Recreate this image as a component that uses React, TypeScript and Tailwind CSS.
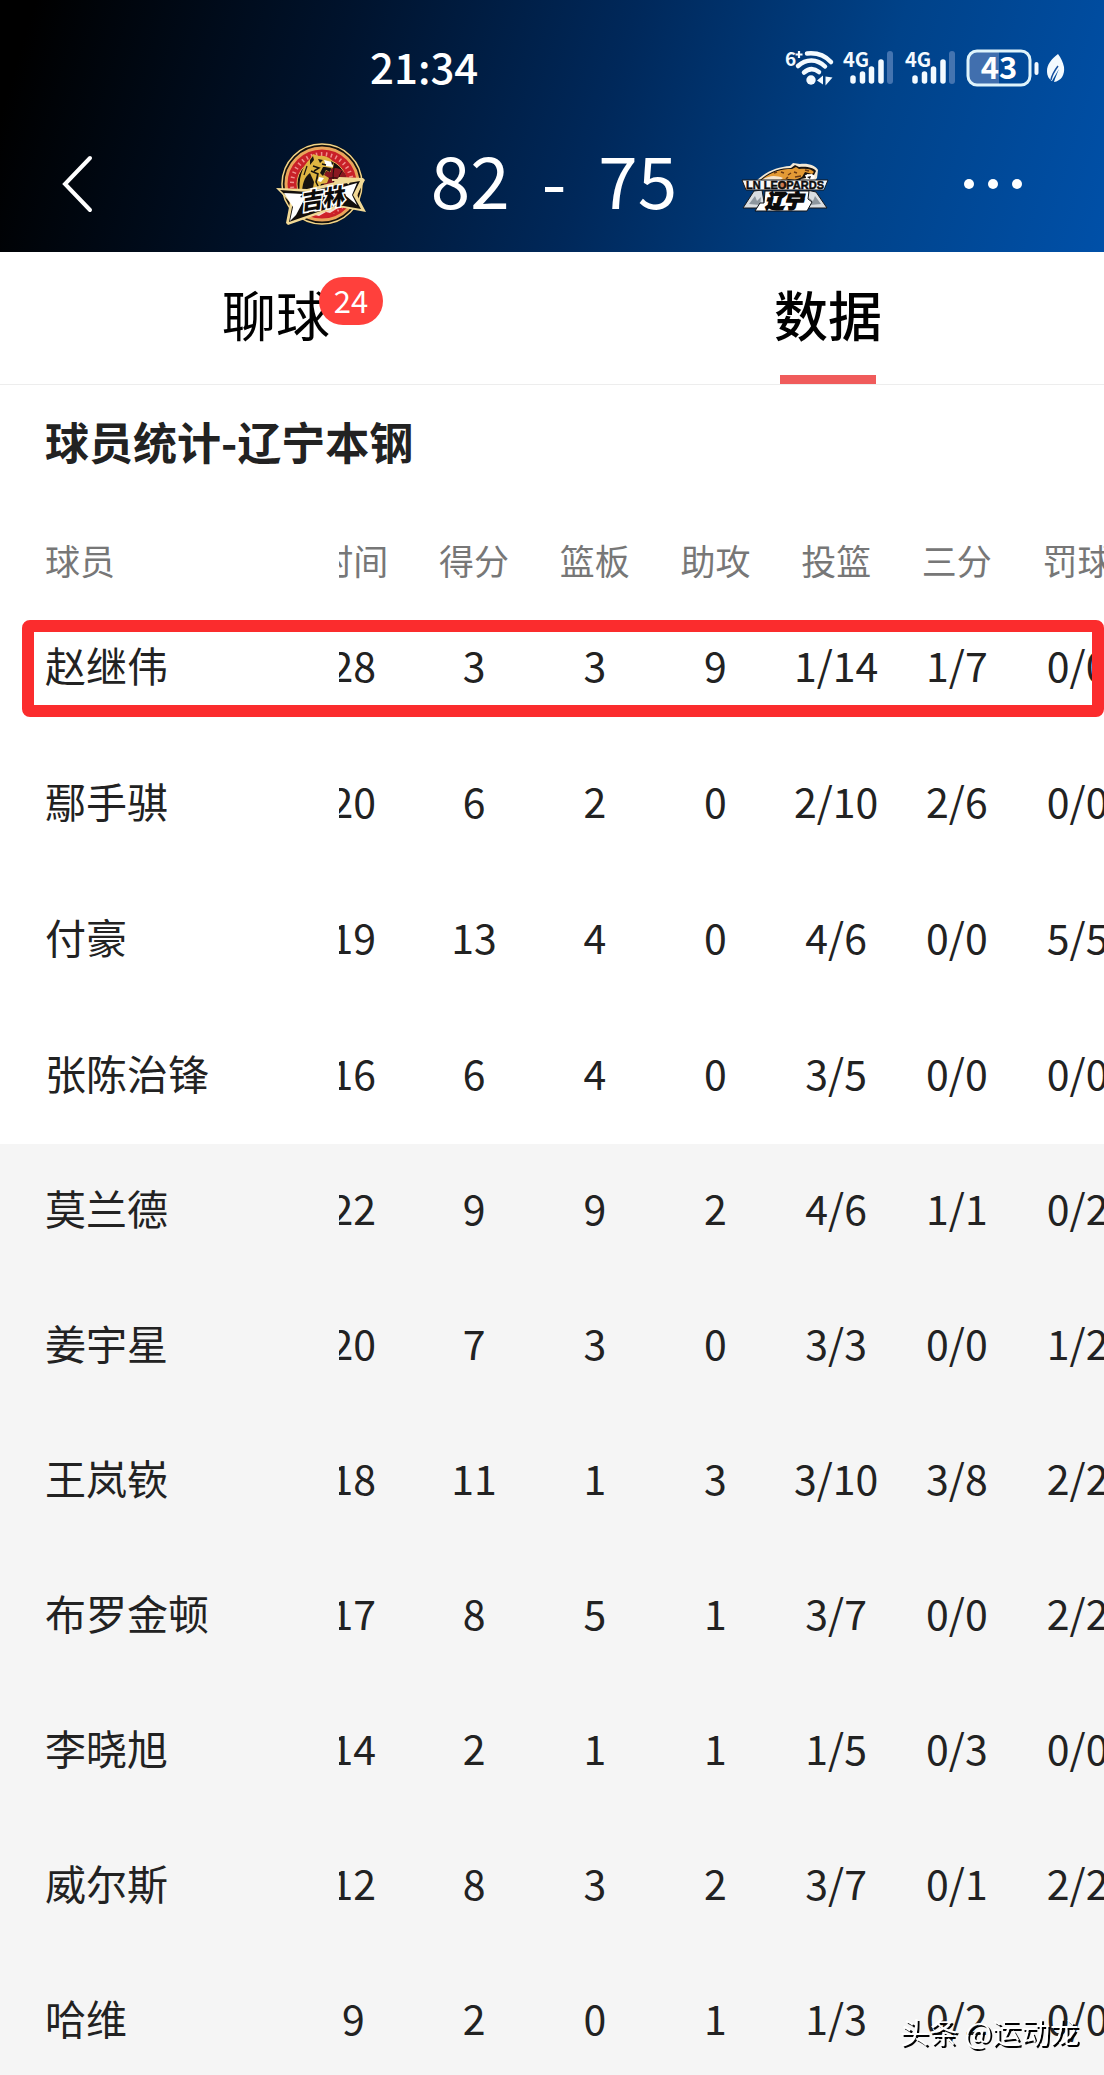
import { useLayoutEffect, useRef } from "react";
import clsx from "clsx";

const columns = ["时间", "得分", "篮板", "助攻", "投篮", "三分", "罚球"];

const starters = [
    { name: "赵继伟", stats: ["28", "3", "3", "9", "1/14", "1/7", "0/0"] },
    { name: "鄢手骐", stats: ["20", "6", "2", "0", "2/10", "2/6", "0/0"] },
    { name: "付豪", stats: ["19", "13", "4", "0", "4/6", "0/0", "5/5"] },
    { name: "张陈治锋", stats: ["16", "6", "4", "0", "3/5", "0/0", "0/0"] },
];

const bench = [
    { name: "莫兰德", stats: ["22", "9", "9", "2", "4/6", "1/1", "0/2"] },
    { name: "姜宇星", stats: ["20", "7", "3", "0", "3/3", "0/0", "1/2"] },
    { name: "王岚嵚", stats: ["18", "11", "1", "3", "3/10", "3/8", "2/2"] },
    { name: "布罗金顿", stats: ["17", "8", "5", "1", "3/7", "0/0", "2/2"] },
    { name: "李晓旭", stats: ["14", "2", "1", "1", "1/5", "0/3", "0/0"] },
    { name: "威尔斯", stats: ["12", "8", "3", "2", "3/7", "0/1", "2/2"] },
    { name: "哈维", stats: ["9", "2", "0", "1", "1/3", "0/2", "0/0"] },
];

type Player = { name: string; stats: string[] };

function WifiIcon() {
    return (
        <svg width="50" height="38" viewBox="0 0 50 38" fill="none" className="overflow-visible" aria-label="Wi-Fi 6+">
            <text x="0" y="17" fontSize="19" fontWeight="700" fill="#f3faff">6</text>
            <path d="M14 2v7M10.500 5.500h7" stroke="#f3faff" strokeWidth="2.200" />
            <g stroke="#f3faff" strokeWidth="4.500" strokeLinecap="round">
                <path d="M22 4.500C31 3.500 40 6.500 46 13" />
                <path d="M13 17C21 9.500 32 9.500 40 17.500" />
                <path d="M19 23.500c5-4.500 10-4.500 15-.500" />
            </g>
            <circle cx="26" cy="31" r="4.700" fill="#f3faff" />
            <path d="M32 31.500l6-5v9zM40.500 27.500v9l7-8z" fill="#f3faff" />
        </svg>
    );
}

function SignalIcon() {
    return (
        <svg width="52" height="38" viewBox="0 0 52 38" fill="none" className="overflow-visible" aria-label="4G">
            <text x="0" y="18" fontSize="20" fontWeight="700" fill="#f3faff">4G</text>
            <g stroke="#f3faff" strokeWidth="5.500" strokeLinecap="round">
                <path d="M10 29v3" />
                <path d="M19.500 25v7" />
                <path d="M28.500 20v12" />
                <path d="M38 13v19" />
            </g>
            <path d="M47 5v27" stroke="#4474b0" strokeWidth="6" strokeLinecap="round" />
        </svg>
    );
}

function BatteryIcon() {
    return (
        <svg width="74" height="38" viewBox="0 0 74 38" fill="none" className="overflow-visible" aria-label="43%">
            <path d="M11 2h22v34H11a9 9 0 0 1-9-9V11a9 9 0 0 1 9-9z" fill="#416fae" />
            <rect x="2" y="2" width="62" height="34" rx="9" stroke="#dff4fb" strokeWidth="3" />
            <path d="M70.500 15v9" stroke="#f3faff" strokeWidth="4" strokeLinecap="round" />
            <text x="33" y="30" textAnchor="middle" fontSize="31" fontWeight="700" fill="#fff">43</text>
        </svg>
    );
}

function LeafIcon() {
    return (
        <svg width="20" height="30" viewBox="0 0 20 30" fill="none">
            <path d="M12 1C5 6 1 12 1 18c0 5 2 8 5 10 2-4 4-7 7-12-2 5-4 9-5 13 7-1 11-7 10-15C17 9 15 5 12 1z" fill="#f3faff" />
            <path d="M12 13C9 17 6 21 5 27" stroke="#1650a0" strokeWidth="1.500" />
        </svg>
    );
}

function TigersLogo() {
    return (
        <svg width="92" height="84" viewBox="0 0 92 84" aria-label="吉林">
            <circle cx="47" cy="42" r="41" fill="#15110c" />
            <circle cx="47" cy="42" r="40" fill="none" stroke="#f0d489" strokeWidth="1.500" />
            <circle cx="47" cy="42" r="36" fill="#c92028" stroke="#e9a45a" strokeWidth="3" />
            <circle cx="47" cy="42" r="30" fill="none" stroke="#f0908e" strokeWidth="4" strokeDasharray="1.500 3.500" />
            <circle cx="47" cy="42" r="25" fill="#17100d" stroke="#e4b85c" strokeWidth="1" />
            {/* basketball behind the head */}
            <circle cx="60" cy="38" r="12" fill="#8a1820" />
            <path d="M48 38q12-5 24 1M59 26q-3 12 3 24M67 29q-6 8-3 20" stroke="#250d0d" fill="none" />
            {/* tiger */}
            <path d="M25 52C23 38 27 24 35 17l3-5 6 2c6-1 12 2 15 7l-1 5-3 1 1 3-5-1-2 4 5 3-2 5-6 1-4 10z" fill="#dfb542" />
            <path d="M27 52c0-9 2-17 8-21l4 9-2 12z" fill="#171310" />
            <path d="M49 18l8 2 1 5-7-1zM44 35l5 1-3 4-3-1z" fill="#fff" />
            <path d="M35 18l3-4 1 4-4 5zM43 17l5 1-3 3zM50 25l6 1-1 4-4-2-3 6-3-3 3-6zM56 19l3 2-2 2z" fill="#171310" />
            <path d="M38 24l6 2-5 3M36 29l7 3-1 5M43 31l-2 9 3 6M47 22l4 1" stroke="#171310" strokeWidth="1.500" fill="none" />
            <path d="M32 24l-3 9" stroke="#171310" strokeWidth="1.200" />
            <path d="M31 69q16-10 34-5-5 10-18 12-9 0-16-7z" fill="#cf2229" />
            <path d="M40 73l7-6 3 3 8-5 5 1-8 5-4-1-7 4z" fill="#f7dcd0" />
            {/* star banner */}
            <path d="M1 46l31 1 28-7 4-5 24 1 2 2-8 15 9 17-27-5-51 18-2-2 4-21z" fill="#f1d995" />
            <path d="M5 48l28 2 28-7 24-4-7 14 8 14-23-4-49 17 4-20z" fill="#130f0d" />
            <path d="M9 51l19 1-3 3 5 1-9 17-6 6 3-14zM82 41l-14 4 3 9 11 9-5-10z" fill="#fff" />
            <text x="47" y="65" textAnchor="middle" fontSize="22" fontWeight="900" fontStyle="italic" transform="rotate(-9 47 58)" fill="#0d0b0a" stroke="#fff" strokeWidth="3" paintOrder="stroke">吉林</text>
            <path d="M57 38h4l-2 5M64 37h4l-2 5M71 37h4l-2 5" stroke="#f1d995" strokeWidth="2" fill="none" />
        </svg>
    );
}

function LeopardsLogo() {
    return (
        <svg width="88" height="58" viewBox="0 -8 88 58" aria-label="辽宁">
            <path d="M12 22C22 9 36 4 49 3l3-3 7 1c9-1 16 2 18 6l-1 8-5 6-5-3-6 4-17 3z" fill="#f4e9d5" />
            <path d="M15 21C26 9 38 5 50 5l4-3 4 2c8-1 15 1 17 4l-2 4-7-1-1 4-5 1-3 4-30 1z" fill="#16120f" />
            <path d="M18 19C29 9 39 6 51 6l4-2 3 2c7-1 13 0 15 3l-2 2-7-2-3 5-7 3-7-1-4 3-6-4-13 4z" fill="#e39a35" />
            <path d="M18 19C27 12 34 12 42 15l-5 4z" fill="#f6e6cf" />
            <path d="M33 10l3-1M40 9l3 1M47 12l3-2M53 9l3 1M45 16l2-2M64 7l4 1M54 14l6-1M51 17l-1 3" stroke="#6b3a14" strokeWidth="1.500" />
            <path d="M64 12l7-1 3 3-4 5-4-2z" fill="#fff" />
            <path d="M66 14l4-1-1 3z" fill="#16120f" />
            {/* mountains */}
            <path d="M2 45l11-17 8-1 3 18zM86 45L75 29l-9-2-3 18z" fill="#d9dde1" stroke="#17191c" />
            <path d="M8 41l6-8 2 5 4-4-1 8zM80 41l-6-8-2 5-4-3 1 7z" fill="#8d969e" />
            <path d="M1 17h86l-4 10H5z" fill="#f6f6f6" stroke="#15191f" />
            <circle cx="42" cy="22" r="4" fill="#c97a50" />
            <text x="44" y="26" textAnchor="middle" fontFamily="Liberation Sans" fontSize="11" fontWeight="700" fill="#0d0d0d" stroke="#0d0d0d" strokeWidth="0.500">LN LEOPARDS</text>
            <path d="M24 28h44l-1 8 4 3-5 9H14l5-8h4z" fill="#fff" stroke="#101317" />
            <text x="43" y="45" textAnchor="middle" fontSize="19" fontWeight="900" fontStyle="italic" fill="#0b0b0b" stroke="#0b0b0b" strokeWidth="1.500">辽宁</text>
        </svg>
    );
}

function StatusBar() {
    return (
        <div className="grid h-[136px] grid-cols-[370px_1fr_auto] items-center pr-[38px]">
            <time className="col-start-2 pb-1 text-[42px] leading-none font-medium">21:34</time>
            <div className="flex items-center">
                <WifiIcon />
                <div className="ml-[8px] flex gap-[10px]">
                    <SignalIcon />
                    <SignalIcon />
                </div>
                <div className="ml-[9px] flex items-center gap-[6px]">
                    <BatteryIcon />
                    <LeafIcon />
                </div>
            </div>
        </div>
    );
}

function ScoreBar() {
    return (
        <div className="grid h-[96px] grid-cols-[1fr_auto_1fr] items-center">
            <button type="button" aria-label="返回" className="ml-[56px] w-[40px]">
                <svg width="40" height="64" viewBox="0 0 40 64" fill="none" stroke="#fff" strokeWidth="4" strokeLinecap="round">
                    <path d="M34 6L9 32l25 26" />
                </svg>
            </button>
            <div className="flex items-center">
                <TigersLogo />
                <div className="mx-[64px] flex gap-[32px] pb-3 text-[71px] leading-none">
                    <span>82</span>
                    <span>-</span>
                    <span>75</span>
                </div>
                <LeopardsLogo />
            </div>
            <button type="button" aria-label="更多" className="mr-[82px] flex gap-[14px] justify-self-end">
                <span className="size-[10px] rounded-full bg-white" />
                <span className="size-[10px] rounded-full bg-white" />
                <span className="size-[10px] rounded-full bg-white" />
            </button>
        </div>
    );
}

function Tabs() {
    return (
        <nav className="grid h-[133px] shrink-0 grid-cols-2 border-b border-[#ededed] bg-white text-[54px] leading-none text-black">
            <button type="button" className="flex items-center justify-center pb-2">
                <span className="relative">
                    聊球
                    <span className="absolute -top-[10px] left-[97px] flex h-[48px] w-[64px] items-center justify-center rounded-full bg-[#ff403c] pb-1 text-[31px] text-white">
                        24
                    </span>
                </span>
            </button>
            <button type="button" className="relative flex items-center justify-center pb-2 font-medium">
                数据
                <span className="absolute bottom-0 h-[9px] w-[96px] bg-[#f05b5b]" />
            </button>
        </nav>
    );
}

function PlayerRow({ player, isBench = false }: { player: Player; isBench?: boolean }) {
    const bg = isBench ? "bg-[#f5f5f5]" : "bg-white";
    return (
        <tr className={clsx(bg, isBench ? "h-[135px]" : "h-[136px]")}>
            <th scope="row" className={clsx("sticky left-0 pb-2 pl-[45px] text-left font-normal", bg)}>
                {player.name}
            </th>
            {player.stats.map((value, i) => (
                <td key={columns[i]} className="pb-2 text-center">
                    {value}
                </td>
            ))}
        </tr>
    );
}

function StatsTable() {
    const scroller = useRef<HTMLDivElement>(null);

    // the stat columns start slightly scrolled under the name column
    useLayoutEffect(() => {
        if (scroller.current) scroller.current.scrollLeft = 46;
    }, []);

    return (
        <div className="relative">
            <div ref={scroller} className="overflow-x-auto [scrollbar-width:none]">
                <table className="w-[1184px] table-fixed text-[41px] leading-none">
                    <colgroup>
                        <col className="w-[339px]" />
                        {columns.map((label) => (
                            <col key={label} />
                        ))}
                    </colgroup>
                    <thead>
                        <tr className="h-[78px] text-[35px] text-[#777]">
                            <th scope="col" className="sticky left-0 bg-white pb-1 pl-[45px] text-left font-normal">
                                球员
                            </th>
                            {columns.map((label) => (
                                <th key={label} scope="col" className="pb-1 font-normal">
                                    {label}
                                </th>
                            ))}
                        </tr>
                    </thead>
                    <tbody>
                        {starters.map((player) => (
                            <PlayerRow key={player.name} player={player} />
                        ))}
                        {bench.map((player) => (
                            <PlayerRow key={player.name} player={player} isBench />
                        ))}
                    </tbody>
                </table>
            </div>
            {/* highlighted player */}
            <div className="pointer-events-none absolute top-[98px] right-0 left-[22px] h-[97px] rounded-[8px] border-[12px] border-[#fb2c2d]" />
        </div>
    );
}

export default function App() {
    return (
        <div className="flex h-screen flex-col overflow-hidden bg-white font-['Noto_Sans_CJK_SC',sans-serif] text-[#222]">
            <header className="h-[252px] shrink-0 bg-[linear-gradient(107deg,#000_3%,#00132d_30%,#00285a_54%,#004289_77%,#0050a8_100%)] text-white">
                <StatusBar />
                <ScoreBar />
            </header>
            <Tabs />
            <main className="min-h-0 flex-1 overflow-y-auto [scrollbar-width:none]">
                <h1 className="px-[45px] pt-[26px] pb-[51px] text-[44px] leading-[60px] font-bold">球员统计-辽宁本钢</h1>
                <StatsTable />
            </main>
            <p className="fixed right-[25px] bottom-[24px] text-[29px] leading-[40px] text-white [text-shadow:2px_2px_0_#000]">
                头条 @运动龙
            </p>
        </div>
    );
}
